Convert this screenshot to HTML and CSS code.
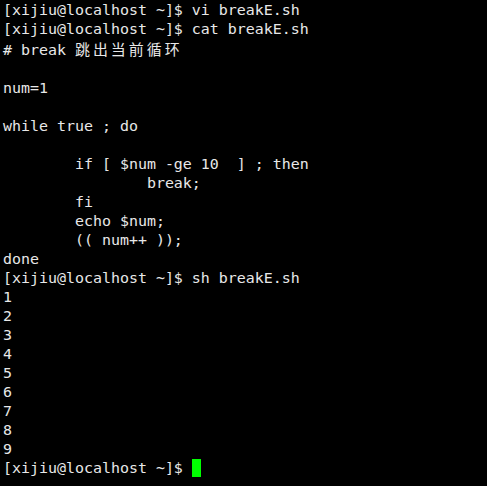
FILE: index.html
```html
<!DOCTYPE html>
<html>
<head>
<meta charset="utf-8">
<link rel="stylesheet" href="styles.css">
</head>
<body>
<pre class="term">[xijiu@localhost ~]$ vi breakE.sh
[xijiu@localhost ~]$ cat breakE.sh
# break <span class="cjk">跳出当前循环</span>

num=1

while true ; do

        if [ $num -ge 10  ] ; then
                break;
        fi
        echo $num;
        (( num++ ));
done
[xijiu@localhost ~]$ sh breakE.sh
1
2
3
4
5
6
7
8
9
[xijiu@localhost ~]$ <span class="cursor"> </span></pre>
</body>
</html>
```

FILE: styles.css
```css
html, body {
  margin: 0;
  padding: 0;
  background: #000;
  height: 100%;
}
.term {
  margin: 0;
  padding: 1px 0 0 3px;
  font-family: "DejaVu Sans Mono", "Noto Sans CJK SC", monospace;
  font-size: 14.95px;
  line-height: 19px;
  color: #e8e8e8;
  white-space: pre;
}
.cjk {
  font-family: "Noto Sans CJK SC", sans-serif;
  letter-spacing: 3px;
}
.cursor {
  display: inline-block;
  width: 9px;
  height: 18px;
  background: #00ff00;
  vertical-align: top;
}
```
